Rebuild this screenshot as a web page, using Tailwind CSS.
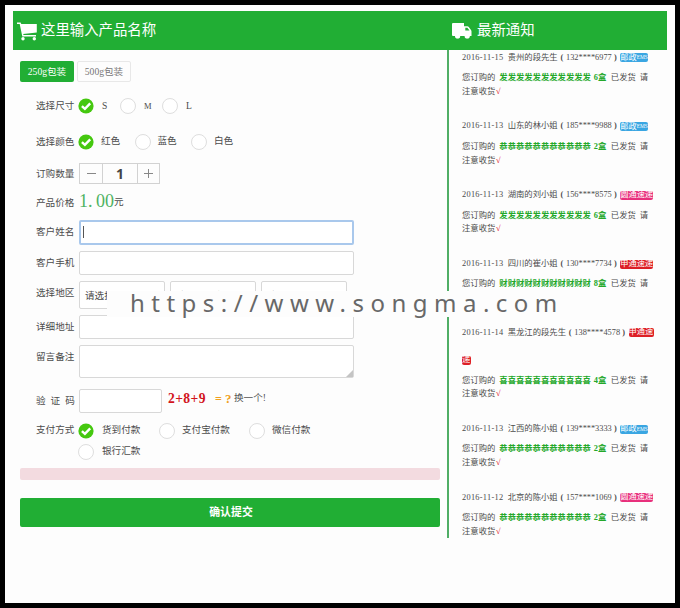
<!DOCTYPE html>
<html lang="zh-CN">
<head>
<meta charset="utf-8">
<title>产品订购</title>
<script src="https://cdn.jsdelivr.net/npm/@tailwindcss/browser@4"></script>
</head>
<body class="w-[680px] h-[608px] bg-black p-[5px] overflow-hidden font-['Liberation_Serif','Noto_Sans_CJK_SC',serif] text-[9.6px] text-[#4c4c4c]">
<div class="relative w-[670px] h-[598px] bg-[#fdfdfd] pt-[6px] px-[8px]">
  <header class="h-[39px] w-[654px] bg-[#21ae34] flex items-center text-white text-[14.4px] leading-[20px]">
    <div class="w-[437px] pl-[4px] flex items-center gap-[4px] -mt-[2px]">
      <svg class="mt-[4px]" width="20" height="19" viewBox="0 0 20 19" fill="#fff"><path d="M0 0.6H3.6L4.3 2H19.8V10.6L6.2 11.9L6.5 13H19V14.4H5.3L2.7 2H0Z"/><circle cx="6" cy="16.8" r="1.7"/><circle cx="17.3" cy="16.8" r="1.7"/></svg>
      <span>这里输入产品名称</span>
    </div>
    <div class="flex items-center gap-[5px] pl-[2px] -mt-[2px]">
      <svg class="mt-[3px]" width="20" height="16" viewBox="0 0 20 16" fill="#fff"><path fill-rule="evenodd" d="M1 0H12V3.2H15.3Q16.2 3.2 16.8 4L19 7Q19.5 7.6 19.5 8.5V13H17.8A2.6 2.6 0 0 1 12.6 13H8.2A2.6 2.6 0 0 1 3 13H1Q0 13 0 12V1Q0 0 1 0ZM13.3 4.7V7.6H17.5L15.4 4.7Z"/><circle cx="5.6" cy="13.3" r="2"/><circle cx="15.2" cy="13.3" r="2"/></svg>
      <span>最新通知</span>
    </div>
  </header>

  <div class="flex h-[488px]">
    <main class="w-[434px] pl-[7px] pt-[11px] pr-[7px]">
      <div class="flex gap-[3px] h-[21px] leading-[21px]">
        <div class="w-[54px] rounded-[2px] bg-[#21ae34] text-white text-center">250g包装</div>
        <div class="w-[54px] rounded-[2px] border border-[#e8e8e8] leading-[19px] text-center text-[#777]">500g包装</div>
      </div>

      <div class="flex items-center h-[36px] mt-[6px] pl-[16px]">
        <span class="w-[42px]">选择尺寸</span>
        <svg class="mr-[8px]" width="16" height="16" viewBox="0 0 16 16"><circle cx="8" cy="8" r="7.6" fill="#45c80f"/><path d="M3.9 8.1L6.9 10.9L12.2 5.4" fill="none" stroke="#fff" stroke-width="2.4"/></svg><span class="w-[18px]">S</span>
        <i class="size-[16px] rounded-full border border-[#dedede] bg-white mr-[8px]"></i><span class="w-[18px] text-[8.5px]">M</span>
        <i class="size-[16px] rounded-full border border-[#dedede] bg-white mr-[8px]"></i><span>L</span>
      </div>
      <div class="flex items-center h-[36px] pl-[16px]">
        <span class="w-[42px]">选择颜色</span>
        <svg class="mr-[7px]" width="16" height="16" viewBox="0 0 16 16"><circle cx="8" cy="8" r="7.6" fill="#45c80f"/><path d="M3.9 8.1L6.9 10.9L12.2 5.4" fill="none" stroke="#fff" stroke-width="2.4"/></svg><span class="w-[33.5px] -mt-px">红色</span>
        <i class="size-[16px] rounded-full border border-[#dedede] bg-white mr-[7px]"></i><span class="w-[33.5px] -mt-px">蓝色</span>
        <i class="size-[16px] rounded-full border border-[#dedede] bg-white mr-[7px]"></i><span class="-mt-px">白色</span>
      </div>
      <div class="flex items-center h-[21px] mt-[3px] pl-[16px]">
        <span class="w-[43px] pt-px">订购数量</span>
        <div class="flex w-[81px] h-[21px] border border-[#d2d2d2] items-stretch">
          <div class="w-[22px] flex items-center justify-center"><svg width="9" height="9"><path d="M0 4.5H9" stroke="#888"/></svg></div>
          <div class="w-[36px] border-x border-[#d2d2d2] text-center text-[14px] leading-[19px] font-bold font-['Noto_Sans'] text-[#444]">1</div>
          <div class="flex-1 flex items-center justify-center"><svg width="9" height="9"><path d="M0 4.5H9M4.5 0V9" stroke="#888"/></svg></div>
        </div>
      </div>
      <div class="flex items-center h-[37px] pl-[16px]">
        <span class="w-[43px] pt-px">产品价格</span>
        <span class="w-[35px] flex text-[18px] leading-[20px] text-[#4fb263] -mt-[3px]"><span class="w-[9px]">1</span><span class="w-[8.5px]">.</span><span>00</span></span>
        <span>元</span>
      </div>

      <div class="flex flex-col gap-[6px] pl-[16px] -mt-px">
        <div class="flex h-[25px] -mb-px leading-[23px]">
          <span class="w-[43px]">客户姓名</span>
          <div class="w-[275px] border-2 border-[#a9c8ec] rounded-[2px] bg-white pl-[2px] pt-[4px]"><div class="w-px h-[12px] bg-[#555]"></div></div>
        </div>
        <div class="flex h-[24px] mt-px leading-[23px]">
          <span class="w-[43px]">客户手机</span>
          <div class="w-[275px] border border-[#d8d8d8] rounded-[2px] bg-white"></div>
        </div>
        <div class="flex h-[28px] leading-[23px]">
          <span class="w-[43px]">选择地区</span>
          <div class="flex gap-[5px] leading-[28px]">
            <div class="w-[86px] border border-[#d8d8d8] rounded-[2px] bg-white pl-[5px]">请选择省份</div>
            <div class="w-[86px] border border-[#d8d8d8] rounded-[2px] bg-white pl-[5px]">请选择城市</div>
            <div class="w-[86px] border border-[#d8d8d8] rounded-[2px] bg-white pl-[5px]">请选择地区</div>
          </div>
        </div>
        <div class="flex h-[24px] leading-[23px]">
          <span class="w-[43px]">详细地址</span>
          <div class="w-[275px] border border-[#d8d8d8] rounded-[2px] bg-white"></div>
        </div>
        <div class="flex h-[33px] leading-[23px]">
          <span class="w-[43px]">留言备注</span>
          <div class="w-[275px] border border-[#d8d8d8] rounded-[2px] bg-white flex justify-end items-end"><svg width="7" height="7"><path d="M7 0L0 7H7Z" fill="#c4c4c4"/></svg></div>
        </div>
      </div>

      <div class="flex h-[24px] mt-[11px] pl-[16px] leading-[23px]">
        <span class="w-[43px] tracking-[5px] whitespace-nowrap">验证码</span>
        <div class="w-[83px] border border-[#d8d8d8] rounded-[2px] bg-white"></div>
        <div class="flex pl-[6px] leading-[20px] font-bold"><span class="w-[47px] text-[13.6px] tracking-[0.4px] text-[#d2141c] whitespace-nowrap">2+8+9</span><span class="w-[10px] text-[#f0a020] text-[12px]">=</span><span class="w-[9px] text-[#f0a020] text-[13px]">?</span></div>
        <span class="leading-[18px] text-[#555]">换一个!</span>
      </div>
      <div class="flex items-center h-[21px] mt-[7px] pl-[16px]">
        <span class="w-[42px]">支付方式</span>
        <svg class="mr-[8px]" width="16" height="16" viewBox="0 0 16 16"><circle cx="8" cy="8" r="7.6" fill="#45c80f"/><path d="M3.9 8.1L6.9 10.9L12.2 5.4" fill="none" stroke="#fff" stroke-width="2.4"/></svg><span class="w-[57px] -mt-px">货到付款</span>
        <i class="size-[16px] rounded-full border border-[#dedede] bg-white mr-[7px]"></i><span class="w-[67px] -mt-px">支付宝付款</span>
        <i class="size-[16px] rounded-full border border-[#dedede] bg-white mr-[7px]"></i><span class="-mt-px">微信付款</span>
      </div>
      <div class="flex items-center h-[21px] pl-[58px]">
        <i class="size-[16px] rounded-full border border-[#dedede] bg-white mr-[8px]"></i><span class="-mt-px">银行汇款</span>
      </div>
      <div class="h-[12px] mt-[6px] rounded-[2px] bg-[#f3dbe0]"></div>
      <div class="h-[29px] mt-[18px] rounded-[2px] bg-[#21ae34] text-white font-bold text-[10.9px] leading-[28px] text-center pl-[2px]">确认提交</div>
    </main>

    <aside class="w-[220px] border-l-2 border-[#50ae66] pl-[13px] overflow-hidden text-[8.33px] whitespace-nowrap">
      <div id="notices" class="-mt-[6px]"></div>
    </aside>
  </div>

  <div class="absolute left-[102px] top-[286px] w-[475px] h-[26px] bg-[#fdfdfd] pl-[23px] text-[24px] leading-[24px] tracking-[6.48px] whitespace-nowrap text-[#686868] font-['Noto_Sans']">https://www.songma.com</div>
</div>
<script>
const EMS = ['<span class="inline-block w-[16.5px]">邮政</span><span class="text-[5.4px] align-[0.6px]">EMS</span>', 'w-[28px] bg-[#3aa6e2]'];
const YT = ['圆通速递', 'w-[33px] bg-[#e8307c]'];
const ST = ['申通速递', 'w-[33px] bg-[#dd1f26]'];
const rows = [
  ['2016-11-15', '贵州的段先生', '132****6977', EMS, '发', 6],
  ['2016-11-13', '山东的林小姐', '185****9988', EMS, '恭', 2],
  ['2016-11-13', '湖南的刘小姐', '156****8575', YT, '发', 6],
  ['2016-11-13', '四川的崔小姐', '130****7734', ST, '财', 8],
  ['2016-11-14', '黑龙江的段先生', '138****4578', ST, '喜', 4],
  ['2016-11-13', '江西的陈小姐', '139****3333', EMS, '恭', 2],
  ['2016-11-12', '北京的陈小姐', '157****1069', YT, '恭', 2]
];
const badge = (t, c) => `<span class="inline-block h-[9px] leading-[8.5px] rounded-[2px] text-white text-[8.2px] ${c}">${t}</span>`;
document.getElementById('notices').innerHTML = rows.map(([d, n, p, b, g, q]) => {
  const long = n.length > 6;
  return `<div class="mb-[13.75px]">
    <div class="h-[27.5px] flex items-center"><span class="w-[45.7px] tracking-[0.28px]">${d}</span><span>${n}</span><b class="w-[8.3px] text-center">(</b><span class="w-[46px]">${p}</span><b class="w-[8.3px] pl-[2px]">)</b>${long ? badge('申通速', 'w-[25px] bg-[#dd1f26]') : badge(b[0], b[1])}</div>
    ${long ? `<div class="h-[27.5px] flex items-center">${badge('递', 'w-[9px] bg-[#dd1f26]')}</div>` : ''}
    <div class="h-[13.75px] flex items-center"><span class="w-[37.3px]">您订购的</span><b class="w-[94.5px] text-[#24a82a]">${g.repeat(11)}</b><b class="w-[17px] text-[#24a82a]">${q}盒</b><span class="w-[29px]">已发货</span><span>请</span></div>
    <div class="h-[13.75px] flex items-center"><span class="w-[34px]">注意收货</span><span class="text-[#e02020]">√</span></div>
  </div>`;
}).join('');
</script>
</body>
</html>
